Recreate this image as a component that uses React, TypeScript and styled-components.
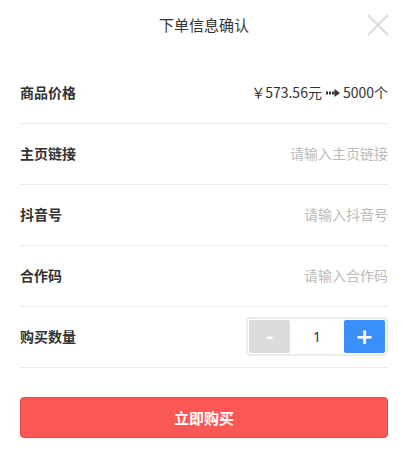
import * as React from "react";
import styled, { createGlobalStyle } from "styled-components";

const GlobalStyle = createGlobalStyle`
  html, body {
    margin: 0;
    padding: 0;
    background: #fff;
  }
  body {
    font-family: "Noto Sans CJK SC", "Noto Sans", sans-serif;
    color: #333;
  }
`;

const Sheet = styled.div`
  width: 403px;
  height: 458px;
  box-sizing: border-box;
  padding: 0 15px 0 20px;
  background: #fff;
`;

const Header = styled.div`
  position: relative;
  height: 63px;
  display: flex;
  align-items: flex-start;
  justify-content: center;
`;

const Title = styled.div`
  margin-top: 13px;
  font-size: 15px;
  line-height: 24px;
  color: #333;
`;

const CloseBtn = styled.button`
  position: absolute;
  right: -2px;
  top: 13px;
  width: 24px;
  height: 24px;
  padding: 0;
  border: none;
  background: none;
  cursor: pointer;
`;

const Row = styled.div`
  height: 60px;
  display: flex;
  align-items: center;
  justify-content: space-between;
  border-bottom: 1px solid #ececec;
`;

const Label = styled.div`
  font-size: 14px;
  font-weight: 700;
  color: #333;
  margin-top: -2px;
`;

const Value = styled.div`
  display: flex;
  align-items: center;
  font-size: 14px;
  color: #333;
  margin-top: -2px;
`;

const Arrow = styled.svg`
  margin: 1px 3px 0 4px;
`;

const Input = styled.input`
  width: 200px;
  border: none;
  outline: none;
  text-align: right;
  font-family: "Noto Sans CJK SC", sans-serif;
  font-size: 14px;
  color: #333;
  padding: 0;
  margin-top: -2px;
  background: transparent;

  &::placeholder {
    color: #bbb;
  }
`;

const Stepper = styled.div`
  display: flex;
  align-items: center;
  height: 33px;
  padding: 1px;
  border: 2px solid #ececec;
  border-radius: 4px;
  margin-top: -1px;
`;

const StepBtn = styled.button<{ $primary?: boolean }>`
  width: 41px;
  height: 33px;
  border: none;
  border-radius: 2px;
  padding: 0;
  background: ${({ $primary }) => ($primary ? "#3b8ff8" : "#dcdcdc")};
  color: #fff;
  font-family: "DejaVu Sans", sans-serif;
  font-size: ${({ $primary }) => ($primary ? "22px" : "18px")};
  font-weight: 700;
  line-height: 33px;
  cursor: pointer;
`;

const Count = styled.div`
  width: 54px;
  text-align: center;
  font-family: "Noto Sans", sans-serif;
  font-size: 14px;
  color: #333;
`;

const BuyButton = styled.button`
  display: block;
  width: 100%;
  height: 41px;
  margin-top: 29px;
  border: 1px solid #e24c4a;
  border-radius: 4px;
  background: #fa5755;
  color: #fff;
  font-family: "Noto Sans CJK SC", sans-serif;
  font-size: 15px;
  font-weight: 700;
  cursor: pointer;
`;

const App: React.FC = () => {
  const [count, setCount] = React.useState(1);

  return (
    <Sheet>
      <GlobalStyle />
      <Header>
        <Title>下单信息确认</Title>
        <CloseBtn aria-label="关闭">
          <svg width="24" height="24" viewBox="0 0 24 24">
            <path d="M2 2 L22 22 M22 2 L2 22" stroke="#dcdcdc" strokeWidth="2.2" fill="none" />
          </svg>
        </CloseBtn>
      </Header>

      <Row>
        <Label>商品价格</Label>
        <Value>
          ￥573.56元
          <Arrow width="14" height="8" viewBox="0 0 14 8">
            <rect x="0" y="2.5" width="2" height="3" fill="#333" />
            <rect x="3" y="2.5" width="2" height="3" fill="#333" />
            <rect x="6" y="2.5" width="2.5" height="3" fill="#333" />
            <path d="M8.5 0 L14 4 L8.5 8 Z" fill="#333" />
          </Arrow>
          5000个
        </Value>
      </Row>

      <Row>
        <Label>主页链接</Label>
        <Input placeholder="请输入主页链接" />
      </Row>

      <Row>
        <Label>抖音号</Label>
        <Input placeholder="请输入抖音号" />
      </Row>

      <Row>
        <Label>合作码</Label>
        <Input placeholder="请输入合作码" />
      </Row>

      <Row>
        <Label>购买数量</Label>
        <Stepper>
          <StepBtn onClick={() => setCount((c) => Math.max(1, c - 1))}>-</StepBtn>
          <Count>{count}</Count>
          <StepBtn $primary onClick={() => setCount((c) => c + 1)}>+</StepBtn>
        </Stepper>
      </Row>

      <BuyButton>立即购买</BuyButton>
    </Sheet>
  );
};

export default App;
